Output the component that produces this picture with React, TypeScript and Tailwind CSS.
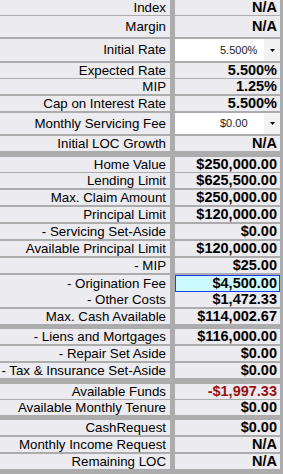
type Row = {
  label: string
  value: string
  h: string
  kind?: 'select' | 'active' | 'negative'
}

// rows are grouped; thick gray bands sit between the groups
const groups: { top: string; rows: Row[] }[] = [
  {
    top: 'mt-0',
    rows: [
      { label: 'Index', value: 'N/A', h: 'h-[14px]' },
      { label: 'Margin', value: 'N/A', h: 'h-[21px]' },
      { label: 'Initial Rate', value: '5.500%', h: 'h-[22px]', kind: 'select' },
      { label: 'Expected Rate', value: '5.500%', h: 'h-[14px]' },
      { label: 'MIP', value: '1.25%', h: 'h-[15px]' },
      { label: 'Cap on Interest Rate', value: '5.500%', h: 'h-[15px]' },
      { label: 'Monthly Servicing Fee', value: '$0.00', h: 'h-[21px]', kind: 'select' },
      { label: 'Initial LOC Growth', value: 'N/A', h: 'h-[15px]' },
    ],
  },
  {
    top: 'mt-[6px]',
    rows: [
      { label: 'Home Value', value: '$250,000.00', h: 'h-[14px]' },
      { label: 'Lending Limit', value: '$625,500.00', h: 'h-[15px]' },
      { label: 'Max. Claim Amount', value: '$250,000.00', h: 'h-[15px]' },
      { label: 'Principal Limit', value: '$120,000.00', h: 'h-[15px]' },
      { label: '- Servicing Set-Aside', value: '$0.00', h: 'h-[15px]' },
      { label: 'Available Principal Limit', value: '$120,000.00', h: 'h-[15px]' },
      { label: '- MIP', value: '$25.00', h: 'h-[15px]' },
      { label: '- Origination Fee', value: '$4,500.00', h: 'h-[15px]', kind: 'active' },
      { label: '- Other Costs', value: '$1,472.33', h: 'h-[15px]' },
      { label: 'Max. Cash Available', value: '$114,002.67', h: 'h-[14px]' },
    ],
  },
  {
    top: 'mt-[6px]',
    rows: [
      { label: '- Liens and Mortgages', value: '$116,000.00', h: 'h-[15px]' },
      { label: '- Repair Set Aside', value: '$0.00', h: 'h-[15px]' },
      { label: '- Tax & Insurance Set-Aside', value: '$0.00', h: 'h-[14px]' },
    ],
  },
  {
    top: 'mt-[7px]',
    rows: [
      { label: 'Available Funds', value: '-$1,997.33', h: 'h-[14px]', kind: 'negative' },
      { label: 'Available Monthly Tenure', value: '$0.00', h: 'h-[14px]' },
    ],
  },
  {
    top: 'mt-[6px]',
    rows: [
      { label: 'CashRequest', value: '$0.00', h: 'h-[15px]' },
      { label: 'Monthly Income Request', value: 'N/A', h: 'h-[15px]' },
      { label: 'Remaining LOC', value: 'N/A', h: 'h-[14px]' },
    ],
  },
]

function ValueCell({ row }: { row: Row }) {
  if (row.kind === 'select') {
    return (
      <div className="flex bg-white">
        <div className="flex flex-1 items-center pl-[45px] text-[11px] leading-none text-[#1a1a2a]">
          {row.value}
        </div>
        <div className="flex w-[16px] items-center justify-center bg-[#f2f2f2]">
          <svg width="5" height="3" viewBox="0 0 5 3">
            <polygon points="0,0 5,0 2.5,3" fill="#000" />
          </svg>
        </div>
      </div>
    )
  }

  if (row.kind === 'active') {
    return (
      <div className="flex items-center justify-end border border-[#1f3cf5] bg-[#ccfbff] pr-[2px] text-[14.5px] font-bold leading-none">
        {row.value}
      </div>
    )
  }

  return (
    <div
      className={`flex items-center justify-end bg-[#ecebef] pr-[3px] text-[14.5px] font-bold leading-none ${
        row.kind === 'negative' ? 'text-[#9c1010]' : 'text-black'
      }`}
    >
      {row.value}
    </div>
  )
}

export default function App() {
  return (
    <div className="flex h-[474px] w-[283px] flex-col overflow-hidden bg-[#acacac] pr-[3px] font-['Liberation_Sans',Arial,sans-serif] text-black">
      {groups.map((group, gi) => (
        <div key={gi} className={`flex flex-col gap-[2px] ${group.top}`}>
          {group.rows.map((row) => (
            <div key={row.label} className={`grid grid-cols-[170px_105px] gap-x-[5px] ${row.h}`}>
              <div className="flex items-center justify-end overflow-hidden whitespace-nowrap bg-[#ecebef] pr-[4px] text-[13.3px] leading-none">
                {row.label}
              </div>
              <ValueCell row={row} />
            </div>
          ))}
        </div>
      ))}
    </div>
  )
}
